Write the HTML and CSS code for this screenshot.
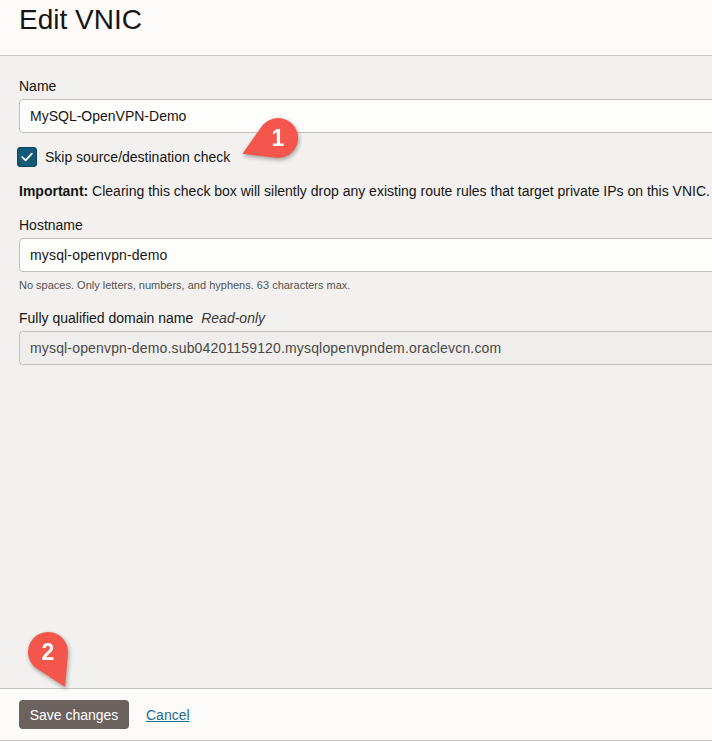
FILE: index.html
```html
<!DOCTYPE html>
<html lang="en">
<head>
<meta charset="utf-8">
<title>Edit VNIC</title>
<link rel="stylesheet" href="styles.css">
</head>
<body>
<div class="page">
  <header class="header">
    <h1 class="title">Edit VNIC</h1>
  </header>
  <main class="main">
    <div class="field">
      <label class="label">Name</label>
      <div class="input">MySQL-OpenVPN-Demo</div>
    </div>
    <div class="check-row">
      <span class="checkbox">
        <svg viewBox="0 0 20 20" width="20" height="20"><path d="M5.2 10.2 L8.6 13.4 L14.8 6.6" fill="none" stroke="#ffffff" stroke-width="1.8" stroke-linecap="round" stroke-linejoin="round"/></svg>
      </span>
      <span class="check-label">Skip source/destination check</span>
    </div>
    <p class="important"><strong>Important:</strong> Clearing this check box will silently drop any existing route rules that target private IPs on this VNIC.</p>
    <div class="field">
      <label class="label">Hostname</label>
      <div class="input input-wide">mysql-openvpn-demo</div>
      <p class="help">No spaces. Only letters, numbers, and hyphens. 63 characters max.</p>
    </div>
    <div class="field field-fqdn">
      <label class="label">Fully qualified domain name <em class="readonly">Read-only</em></label>
      <div class="input input-wide input-readonly">mysql-openvpn-demo.sub04201159120.mysqlopenvpndem.oraclevcn.com</div>
    </div>
  </main>
  <footer class="footer">
    <button class="btn-save" type="button">Save changes</button>
    <a class="cancel" href="#">Cancel</a>
  </footer>

  <svg class="marker marker-1" viewBox="-50 -50 100 100" width="100" height="100">
    <path d="M0 39 L17.16 10.27 A20 20 0 1 0 -17.16 10.27 Z" transform="rotate(66)" fill="#f4564c"/>
    <text x="0" y="8" text-anchor="middle" class="marker-num">1</text>
  </svg>
  <svg class="marker marker-2" viewBox="-50 -50 100 100" width="100" height="100">
    <path d="M0 39 L17.16 10.27 A20 20 0 1 0 -17.16 10.27 Z" transform="rotate(-26)" fill="#f4564c"/>
    <text x="0" y="8" text-anchor="middle" class="marker-num">2</text>
  </svg>
</div>
</body>
</html>
```

FILE: styles.css
```css
* { box-sizing: border-box; }

html, body {
  margin: 0;
  padding: 0;
  height: 100%;
  overflow: hidden;
}

body {
  font-family: "Liberation Sans", Arial, sans-serif;
  color: #161513;
  background: #f2f1ef;
}

.page {
  position: relative;
  height: 741px;
  display: flex;
  flex-direction: column;
}

.header {
  height: 56px;
  background: #fcfbfa;
  border-bottom: 1px solid #c9c6c1;
  padding: 0 19px;
  flex: none;
}

.title {
  margin: 0;
  font-size: 28px;
  font-weight: normal;
  line-height: 32px;
  padding-top: 4px;
  color: #161513;
}

.main {
  flex: 1;
  padding: 22px 0 0 19px;
  overflow: hidden;
}

.field {
  display: flex;
  flex-direction: column;
  width: 760px;
}

.label {
  font-size: 14px;
  line-height: 17px;
  margin-bottom: 4px;
  color: #161513;
}

.readonly {
  font-style: italic;
  margin-left: 4px;
  color: #3a3836;
}

.input {
  height: 34px;
  border: 1px solid #c4c1bc;
  border-radius: 4px;
  background: #fdfdfc;
  padding: 0 10px;
  font-size: 14px;
  line-height: 32px;
  color: #161513;
  white-space: nowrap;
}

.input-wide {
  letter-spacing: 0.16px;
}

.input-readonly {
  background: #efeeec;
  color: #4a4845;
}

.check-row {
  display: flex;
  align-items: center;
  gap: 8px;
  margin-top: 14px;
  height: 20px;
  margin-left: -2px;
}

.checkbox {
  width: 20px;
  height: 20px;
  border-radius: 4px;
  background: #145a78;
  box-shadow: inset 0 0 0 1px #0d4560;
  display: flex;
}

.check-label {
  font-size: 14px;
  line-height: 17px;
}

.important {
  margin: 16px 0 17px 0;
  font-size: 14px;
  line-height: 17px;
  white-space: nowrap;
}

.important strong { font-weight: bold; }

.help {
  margin: 6px 0 0 0;
  font-size: 11px;
  line-height: 14px;
  color: #55524f;
}

.field-fqdn {
  margin-top: 18px;
}

.footer {
  flex: none;
  height: 53px;
  background: #fcfbf9;
  border-top: 1px solid #c5c2bd;
  border-bottom: 1px solid #c5c2bd;
  padding: 0 19px;
  display: flex;
  align-items: center;
  gap: 17px;
}

.btn-save {
  width: 110px;
  height: 29px;
  border: none;
  border-radius: 4px;
  background: #6b625e;
  color: #ffffff;
  font-family: "Liberation Sans", Arial, sans-serif;
  font-size: 14px;
  padding: 0;
}

.cancel {
  font-size: 14px;
  color: #1e6b8c;
  text-decoration: underline;
}

.marker {
  position: absolute;
  overflow: visible;
  filter: drop-shadow(1px 2px 2px rgba(0, 0, 0, 0.35));
}

.marker-1 { left: 228px; top: 88px; }
.marker-2 { left: -2px; top: 602px; }

.marker-num {
  fill: #ffffff;
  font-family: "Liberation Sans", Arial, sans-serif;
  font-size: 23px;
  font-weight: bold;
}
```
